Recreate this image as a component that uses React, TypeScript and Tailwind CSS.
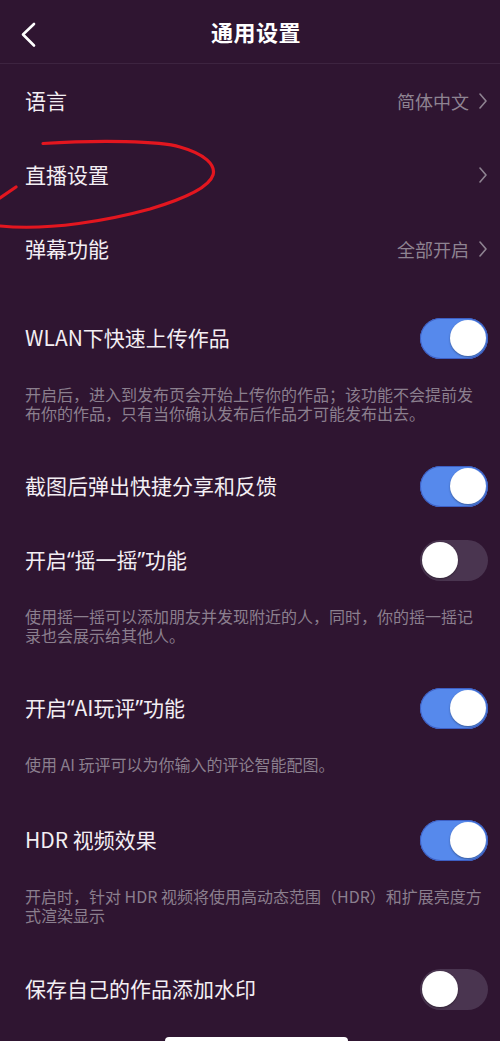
import React from 'react';

type Row =
  | { kind: 'nav'; label: React.ReactNode; value?: string }
  | { kind: 'toggle'; label: React.ReactNode; on: boolean; desc?: string; descClass?: string };

// narrow latin quotes, like the iOS rendering
const Q = ({ children }: { children: string }) => (
  <span className="font-['Noto_Sans',sans-serif]">{children}</span>
);

const NAV_ROWS: Row[] = [
  { kind: 'nav', label: '语言', value: '简体中文' },
  { kind: 'nav', label: '直播设置' },
  { kind: 'nav', label: '弹幕功能', value: '全部开启' },
];

const TOGGLE_ROWS: Row[] = [
  {
    kind: 'toggle',
    label: 'WLAN下快速上传作品',
    on: true,
    desc: '开启后，进入到发布页会开始上传你的作品；该功能不会提前发布你的作品，只有当你确认发布后作品才可能发布出去。',
  },
  { kind: 'toggle', label: '截图后弹出快捷分享和反馈', on: true },
  {
    kind: 'toggle',
    label: (
      <>
        开启<Q>“</Q>摇一摇<Q>”</Q>功能
      </>
    ),
    on: false,
    desc: '使用摇一摇可以添加朋友并发现附近的人，同时，你的摇一摇记录也会展示给其他人。',
  },
  {
    kind: 'toggle',
    label: (
      <>
        开启<Q>“</Q>AI玩评<Q>”</Q>功能
      </>
    ),
    on: true,
    desc: '使用 AI 玩评可以为你输入的评论智能配图。',
    descClass: 'pb-[29px]',
  },
  {
    kind: 'toggle',
    label: 'HDR 视频效果',
    on: true,
    desc: '开启时，针对 HDR 视频将使用高动态范围（HDR）和扩展亮度方\n式渲染显示',
    descClass: 'pb-[27px]',
  },
  { kind: 'toggle', label: '保存自己的作品添加水印', on: false },
];

function Chevron({ className }: { className?: string }) {
  return (
    <svg viewBox="0 0 8 16" className={className} fill="none">
      <path d="M1 1 L7 8 L1 15" stroke="currentColor" strokeWidth="1.6" strokeLinecap="round" strokeLinejoin="round" />
    </svg>
  );
}

function Toggle({ on }: { on: boolean }) {
  return (
    <div
      className={
        on
          ? 'flex h-[41px] w-[68px] items-center justify-end rounded-full bg-[#5689ec] px-[2px] shadow-[inset_0_0_0_1px_#3d5fc4]'
          : 'flex h-[41px] w-[68px] items-center justify-start rounded-full bg-[#4a3550] px-[2px]'
      }
    >
      <div className="h-[36px] w-[36px] rounded-full bg-white shadow-[0_1px_2px_rgba(0,0,0,0.35)]" />
    </div>
  );
}

export default function App() {
  return (
    <div className="relative h-[1041px] w-[500px] overflow-hidden bg-[#2f1531] font-['Noto_Sans_CJK_SC',sans-serif] text-[#f3eef3]">
      {/* header */}
      <div className="relative flex h-[64px] items-center justify-center border-b border-[#3d2440] pl-[12px]">
        <svg viewBox="0 0 16 26" className="absolute left-[20px] top-[22px] h-[26px] w-[16px]" fill="none">
          <path d="M14 2 L3 12.5 L14 23.5" stroke="white" strokeWidth="2.6" strokeLinecap="round" strokeLinejoin="round" />
        </svg>
        <h1 className="text-[22px] font-bold tracking-[0.5px] text-white">通用设置</h1>
      </div>

      {NAV_ROWS.map((row, i) =>
        row.kind === 'nav' ? (
          <div key={i} className="flex h-[74px] items-center justify-between pl-[25px] pr-[13px]">
            <span className="text-[21px]">{row.label}</span>
            <div className="flex items-center gap-[10px] text-[#8e8391]">
              {row.value && <span className="text-[18px]">{row.value}</span>}
              <Chevron className="h-[16px] w-[8px]" />
            </div>
          </div>
        ) : null,
      )}

      <div className="h-[15px]" />

      {TOGGLE_ROWS.map((row, i) =>
        row.kind === 'toggle' ? (
          <div key={i}>
            <div className="flex h-[74px] items-center justify-between pl-[25px] pr-[12px]">
              <span className="text-[21px]">{row.label}</span>
              <Toggle on={row.on} />
            </div>
            {row.desc && (
              <p
                className={`whitespace-pre-line pl-[25px] pr-[14px] pt-[10px] text-[16px] leading-[19px] text-[#8b7f8e] ${
                  row.descClass ?? 'pb-[26px]'
                }`}
              >
                {row.desc}
              </p>
            )}
          </div>
        ) : null,
      )}

      <div className="ml-[165px] mt-[11px] h-[8px] w-[183px] rounded-full bg-white" />

      {/* red hand-drawn annotation */}
      <svg
        viewBox="0 0 220 110"
        className="pointer-events-none absolute left-0 top-[130px] h-[110px] w-[220px]"
        fill="none"
      >
        <path
          d="M43 13.5 C 100 10, 160 11, 180 17 C 205 24, 216 35, 213 45 C 209 58, 180 70, 150 79 C 110 90, 50 101, 0 96"
          stroke="#e3161f"
          strokeWidth="3.2"
          strokeLinecap="round"
        />
        <path d="M16 57 L 0 68" stroke="#e3161f" strokeWidth="3.2" strokeLinecap="round" />
      </svg>
    </div>
  );
}
